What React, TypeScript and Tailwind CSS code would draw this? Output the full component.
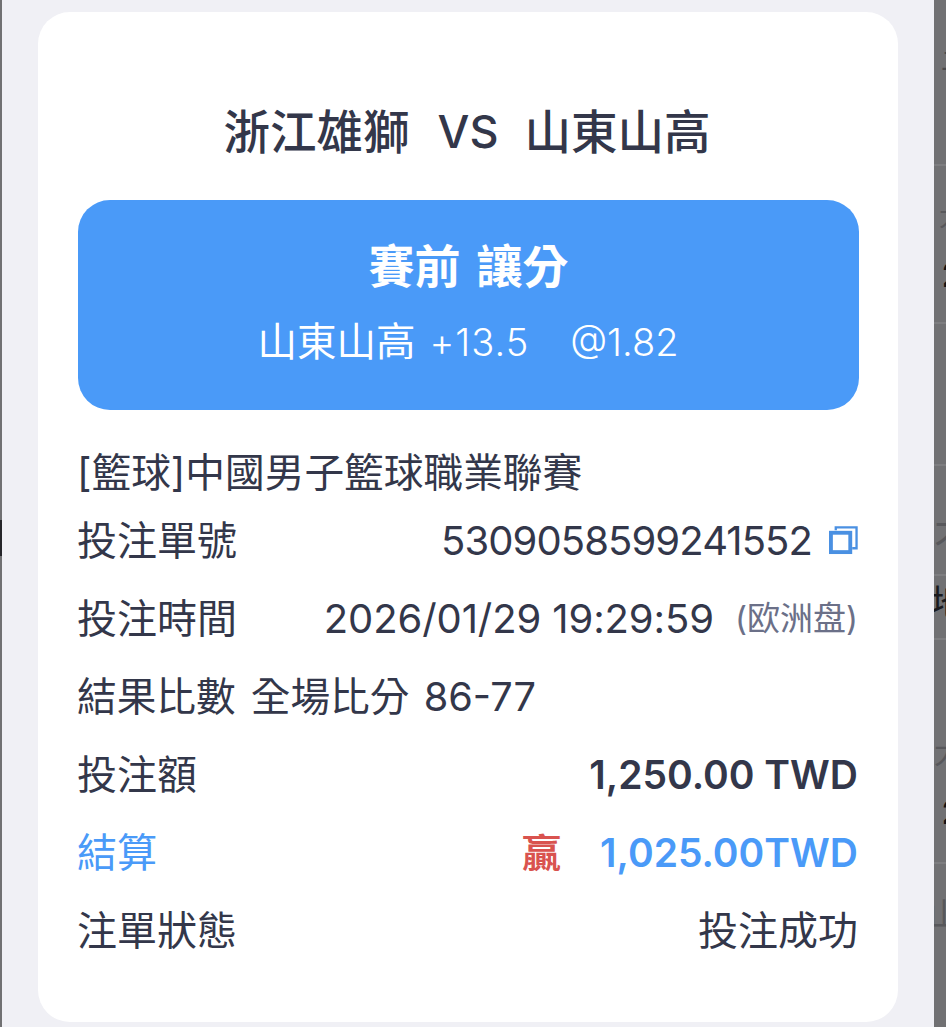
const font = { fontFamily: 'Inter, "Noto Sans CJK TC", sans-serif' };

const Line = () => <div className="h-[2px] shrink-0 bg-[#7e7e80]" />;

const Gap = ({ h }: { h: number }) => <div className="shrink-0" style={{ height: h }} />;

// what shows of the page behind the popup
const BehindStrip = () => (
  <div className="flex h-[1027px] w-[12px] shrink-0 flex-col overflow-hidden whitespace-nowrap">
    <Gap h={48} />
    <div className="ml-[7px] h-[26px] shrink-0 text-[26px] leading-[26px] text-[#4a4a4d]">二</div>
    <Gap h={90} />
    <Line />
    <Gap h={38} />
    <div className="ml-[5px] h-[26px] shrink-0 text-[26px] leading-[26px] text-[#58585b]">大</div>
    <Gap h={28} />
    <div className="ml-[8px] h-[34px] shrink-0 text-[34px] leading-[34px] font-bold text-[#111114]">2</div>
    <Gap h={30} />
    <Line />
    <Gap h={140} />
    <Line />
    <Gap h={52} />
    <div className="h-[40px] shrink-0 text-[38px] leading-[40px] text-[#58585b]">不</div>
    <Gap h={16} />
    <Line />
    <Gap h={8} />
    <div className="ml-[-4px] h-[38px] shrink-0 text-[36px] leading-[38px] text-[#1a1a1d]">地</div>
    <Gap h={16} />
    <Line />
    <Gap h={96} />
    <div className="h-[32px] shrink-0 text-[30px] leading-[32px] text-[#58585b]">大</div>
    <Gap h={30} />
    <div className="ml-[8px] h-[30px] shrink-0 text-[32px] leading-[30px] font-bold text-[#111114]">2</div>
    <Gap h={34} />
    <Line />
    <Gap h={34} />
    <div className="ml-[-6px] h-[34px] shrink-0 text-[32px] leading-[34px] text-[#58585b]">山</div>
  </div>
);

const CopyIcon = () => (
  <svg width="29" height="29" viewBox="0 0 30 30" fill="none" className="mt-[-2px] shrink-0">
    <path d="M7 4.5V1.5H28.5V23H24" stroke="#4a90e2" strokeWidth="2.4" />
    <rect x="2" y="7" width="20" height="20" stroke="#4a90e2" strokeWidth="4" />
  </svg>
);

const App = () => {
  return (
    <div className="flex h-[1027px] w-[946px] overflow-hidden bg-[#717173]" style={font}>
      <div className="w-[2px] shrink-0 pt-[520px]">
        <div className="h-[36px] bg-[#26262a]" />
      </div>
      <div className="w-[932px] shrink-0 bg-[#f0f0f5] pl-[36px] pt-[12px]">
        <div className="flex h-[1010px] w-[860px] flex-col rounded-[32px] bg-white px-[40px] text-[#33374a]">
          <h1 className="mt-[92px] flex h-[56px] items-center justify-center pr-[2px] text-[46.5px] leading-[56px] font-medium">
            <span>浙江雄獅</span>
            <span className="mr-[26px] ml-[28px] text-[45px]">VS</span>
            <span>山東山高</span>
          </h1>
          <div className="mt-[40px] flex h-[210px] w-[781px] flex-col items-center rounded-[32px] bg-[#4a9af8] pt-[38px] text-white">
            <div className="text-[46px] leading-[56px] font-bold [word-spacing:5px]">賽前 讓分</div>
            <div className="mt-[23px] flex items-baseline gap-[41px] pr-[1px] text-[38px] leading-[50px]">
              <span className="flex items-baseline gap-[14px]">
                <span className="text-[39.5px]">山東山高</span>
                <span className="font-light tracking-[1px]">+13.5</span>
              </span>
              <span className="font-light">@1.82</span>
            </div>
          </div>
          <div className="mt-[38px] ml-[-1px] h-[50px] text-[39.7px] leading-[50px]">[籃球]中國男子籃球職業聯賽</div>
          <div className="ml-[-1px] flex w-[781px] flex-col text-[40px]">
            <div className="mt-[18px] flex h-[50px] items-center justify-between">
              <span>投注單號</span>
              <span className="flex items-center gap-[17px]">
                <span className="tracking-[-0.9px]">5309058599241552</span>
                <CopyIcon />
              </span>
            </div>
            <div className="mt-[28px] flex h-[50px] items-center justify-between">
              <span>投注時間</span>
              <span className="flex items-center gap-[21px]">
                <span className="tracking-[-0.1px]">2026/01/29 19:29:59</span>
                <span className="text-[33px] text-[#6b7088]">(欧洲盘)</span>
              </span>
            </div>
            <div className="mt-[29px] flex h-[50px] items-center gap-[15px] text-[39.7px]">
              <span>結果比數</span>
              <span className="[word-spacing:3px]">全場比分 86-77</span>
            </div>
            <div className="mt-[27px] flex h-[50px] items-center justify-between">
              <span>投注額</span>
              <span className="text-[39px] font-semibold">1,250.00 TWD</span>
            </div>
            <div className="mt-[28px] flex h-[50px] items-center justify-between text-[#4a9af8]">
              <span>結算</span>
              <span className="flex items-center gap-[39px] text-[39px] font-semibold">
                <span className="text-[#d9534f]">贏</span>
                1,025.00TWD
              </span>
            </div>
            <div className="mt-[28px] flex h-[50px] items-center justify-between">
              <span>注單狀態</span>
              <span>投注成功</span>
            </div>
          </div>
        </div>
      </div>
      <BehindStrip />
    </div>
  );
};

export default App;
